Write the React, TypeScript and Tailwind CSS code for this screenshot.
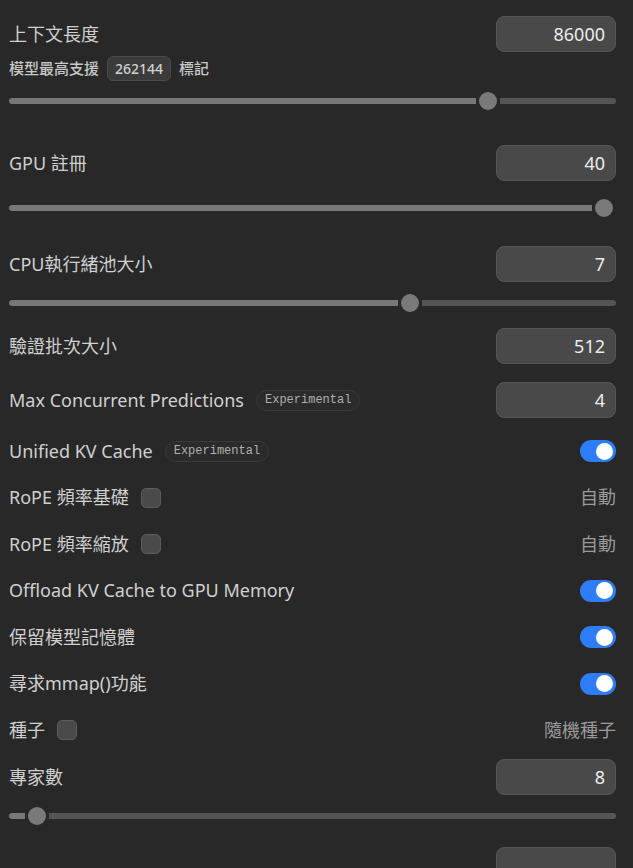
import React from "react";

type SliderRow = { label: string; value: string; pct: number };

function NumberBox({ value }: { value: string }) {
  return (
    <div className="flex h-9 w-[120px] items-center justify-end rounded-[8px] border border-[#555555] bg-[#494949] pr-[10px] text-[18px] text-[#ececec]">
      {value}
    </div>
  );
}

function Slider({ pct }: { pct: number }) {
  return (
    <div className="flex h-[18px] items-center">
      <div className="h-[6px] rounded-l-full bg-[#777777]" style={{ flexGrow: pct, flexBasis: 0 }} />
      <div className="mx-[3px] h-[18px] w-[18px] shrink-0 rounded-full bg-[#7a7a7a]" />
      <div className="h-[6px] rounded-r-full bg-[#555555]" style={{ flexGrow: 100 - pct, flexBasis: 0 }} />
    </div>
  );
}

function Header({ label, value, badge }: { label: string; value: string; badge?: boolean }) {
  return (
    <div className="flex h-9 items-center justify-between">
      <div className="flex items-center gap-3">
        <span>{label}</span>
        {badge && <Experimental />}
      </div>
      <NumberBox value={value} />
    </div>
  );
}

function Experimental() {
  return (
    <span className="flex h-[21px] items-center rounded-full border border-[#3a3a3a] bg-[#2b2b2b] px-2 font-['Liberation_Mono','DejaVu_Sans_Mono',monospace] text-[12px] text-[#b0b0b0]">
      Experimental
    </span>
  );
}

function Toggle() {
  return (
    <div className="flex h-[22px] w-9 items-center justify-end rounded-full bg-[#2e7cf6] pr-[3px]">
      <div className="h-[17px] w-[17px] rounded-full bg-white" />
    </div>
  );
}

function Checkbox() {
  return <div className="h-5 w-5 rounded-[5px] border border-[#5c5c5c] bg-[#4a4a4a]" />;
}

function SimpleRow({ children, right }: { children: React.ReactNode; right: React.ReactNode }) {
  return (
    <div className="flex h-[46.5px] items-center justify-between">
      <div className="flex items-center gap-3">{children}</div>
      {right}
    </div>
  );
}

const sliders: SliderRow[] = [
  { label: "GPU 註冊", value: "40", pct: 100 },
  { label: "CPU執行緒池大小", value: "7", pct: 66.7 },
];

export default function App() {
  return (
    <div className="h-[868px] overflow-hidden bg-[#282828] pl-[9px] pr-[17px] pt-4 font-['Noto_Sans','Noto_Sans_CJK_TC',sans-serif] text-[18px] text-[#d0d0d0]">
      <Header label="上下文長度" value="86000" />
      <div className="mt-1 flex h-[25px] items-center gap-2 text-[15px] font-medium text-[#c8c8c8]">
        <span>模型最高支援</span>
        <span className="flex h-[25px] items-center rounded-[6px] border border-[#4a4a4a] bg-[#3b3b3b] px-[7px] text-[14px] text-[#d0d0d0]">
          262144
        </span>
        <span>標記</span>
      </div>
      <div className="mt-[11px]">
        <Slider pct={80.1} />
      </div>

      <div className="mt-[35px]">
        <Header label={sliders[0].label} value={sliders[0].value} />
      </div>
      <div className="mt-[18px]">
        <Slider pct={sliders[0].pct} />
      </div>

      <div className="mt-[29px]">
        <Header label={sliders[1].label} value={sliders[1].value} />
      </div>
      <div className="mt-3">
        <Slider pct={sliders[1].pct} />
      </div>

      <div className="mt-4">
        <Header label="驗證批次大小" value="512" />
      </div>
      <div className="mt-[18px]">
        <Header label="Max Concurrent Predictions" value="4" badge />
      </div>

      <div className="mt-[10px]">
        <SimpleRow right={<Toggle />}>
          <span>Unified KV Cache</span>
          <Experimental />
        </SimpleRow>
        <SimpleRow right={<span className="text-[#9a9a9a]">自動</span>}>
          <span>RoPE 頻率基礎</span>
          <Checkbox />
        </SimpleRow>
        <SimpleRow right={<span className="text-[#9a9a9a]">自動</span>}>
          <span>RoPE 頻率縮放</span>
          <Checkbox />
        </SimpleRow>
        <SimpleRow right={<Toggle />}>
          <span>Offload KV Cache to GPU Memory</span>
        </SimpleRow>
        <SimpleRow right={<Toggle />}>
          <span>保留模型記憶體</span>
        </SimpleRow>
        <SimpleRow right={<Toggle />}>
          <span>尋求mmap()功能</span>
        </SimpleRow>
        <SimpleRow right={<span className="text-[#9a9a9a]">隨機種子</span>}>
          <span>種子</span>
          <Checkbox />
        </SimpleRow>
      </div>

      <div className="mt-[5.5px]">
        <Header label="專家數" value="8" />
      </div>
      <div className="mt-3">
        <Slider pct={2.7} />
      </div>
      <div className="mt-[22px] flex justify-end">
        <NumberBox value="" />
      </div>
    </div>
  );
}
